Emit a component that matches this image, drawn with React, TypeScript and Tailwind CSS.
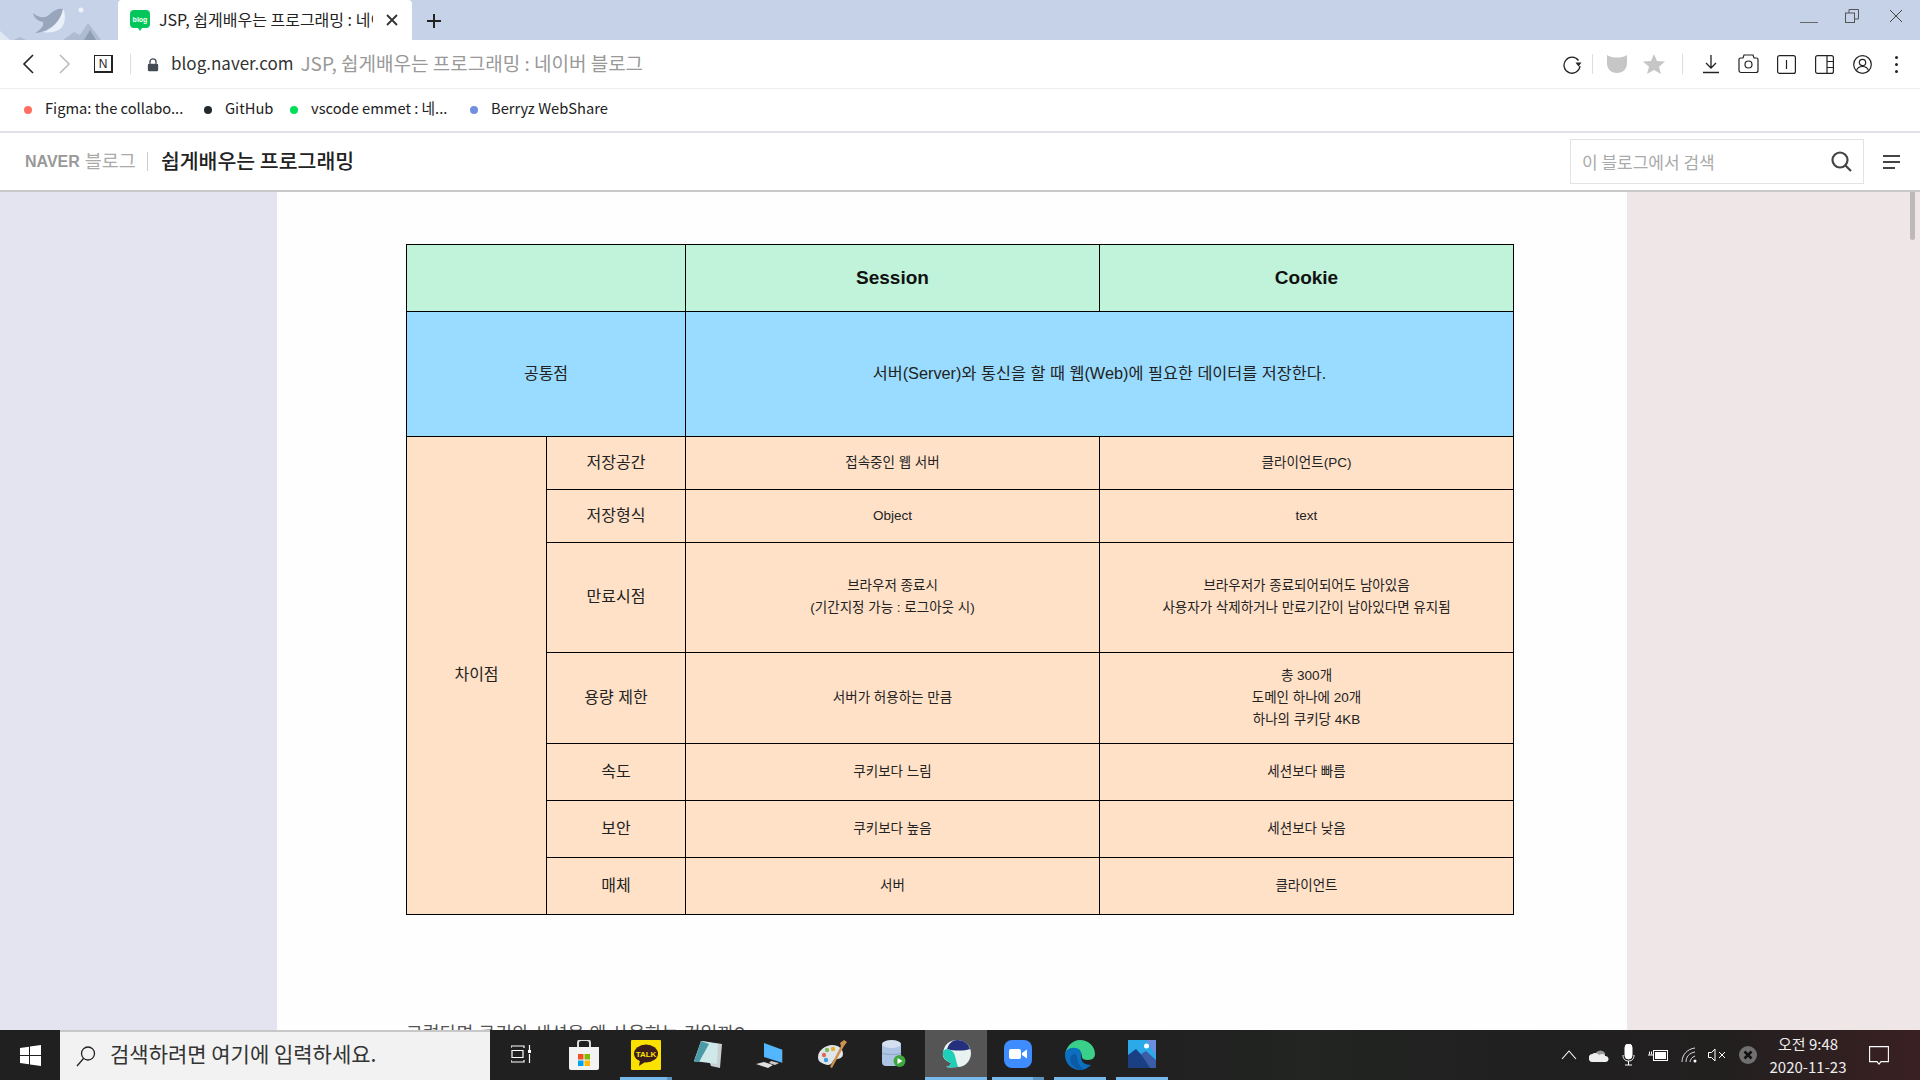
import React from "react";

const CJK = "font-['Noto_Sans_CJK_KR','Noto_Sans',sans-serif]";
const ARIAL = "font-['Liberation_Sans','Noto_Sans_CJK_KR',sans-serif]";

const td = "border border-black text-center align-middle text-[13.5px] leading-[22px] text-[#222] p-0 pb-[1px]";
const peach = "bg-[#ffe1c8]";

function Tb({ children, active, bar, split, w = 62 }: { children: React.ReactNode; active?: boolean; bar?: boolean; split?: number; w?: number }) {
  return (
    <div className={`relative h-full flex items-start pt-[10px] justify-center ${active ? "bg-[#555555]" : ""}`} style={{ width: w }}>
      {children}
      {bar ? (
        <div className={`absolute bottom-0 h-[3px] flex ${active ? "left-0 right-0" : "left-[5px] right-[5px]"}`}>
          <div className="flex-1 bg-[#76b9ed]" />
          {split ? <div className="bg-[#5b93c0]" style={{ width: split }} /> : null}
        </div>
      ) : null}
    </div>
  );
}

function Row({ label, a, b, h, first }: { label: string; a: React.ReactNode; b: React.ReactNode; h: number; first?: boolean }) {
  return (
    <tr style={{ height: h }}>
      {first ? (
        <td rowSpan={7} className={`${td} ${peach} text-[16px]`}>차이점</td>
      ) : null}
      <td className={`${td} ${peach} text-[16px]`}>{label}</td>
      <td className={`${td} ${peach}`}>{a}</td>
      <td className={`${td} ${peach}`}>{b}</td>
    </tr>
  );
}

function Bookmark({ color, text, w }: { color: string; text: string; w: number }) {
  return (
    <div className="flex items-center" style={{ width: w }}>
      <span className="w-[8px] h-[8px] rounded-full shrink-0" style={{ background: color }} />
      <span className="ml-[13px] mb-[4px] text-[14.7px] text-[#222] whitespace-nowrap">{text}</span>
    </div>
  );
}

export default function App() {
  return (
    <div className={`h-screen w-screen overflow-hidden flex flex-col bg-white ${CJK}`}>
      {/* tab strip */}
      <div className="h-[40px] shrink-0 bg-[#c5d2e8] flex relative">
        <div className="w-[118px] h-full relative overflow-hidden">
          <svg width="118" height="40" viewBox="0 0 118 40">
            <path d="M0 31 L10 40 L0 40Z" fill="#e2e8f2" />
            <path d="M14 40 L20 37 L26 40Z" fill="#aebbd0" />
            <path d="M63 40 L74 32 L80 35 L88 23 L101 40Z" fill="#aebbd0" />
            <path d="M84 40 L90 30 L96 40Z" fill="#8f9db4" />
            <path d="M33 13 C40 19 46 18 50 14 C54 10 59 8 63 9 C62 20 50 32 35 33 C42 29 44 25 43 22 C38 21 34 18 33 13Z" fill="#98a5ba" />
            <path d="M63 9 C66 14 66 24 60 29 C54 33 47 33 43 32 C52 30 61 20 63 9Z" fill="#eaf0f8" />
            <circle cx="81" cy="10" r="2.500" fill="#eef2f8" />
          </svg>
        </div>
        <div className="w-[294px] h-full bg-white rounded-t-[4px] flex items-center pl-[12px]">
          <svg width="20" height="21" viewBox="0 0 20 21" className="shrink-0">
            <rect x="0" y="0" width="20" height="18" rx="4" fill="#03c75a" />
            <path d="M8 18h4l-2 3z" fill="#03c75a" />
            <text x="10" y="11.500" fontSize="7" fontWeight="700" textAnchor="middle" fill="#fff" fontFamily="Liberation Sans">blog</text>
          </svg>
          <span className="ml-[9px] mb-[2px] w-[214px] overflow-hidden whitespace-nowrap text-[16px] text-[#222]">JSP, 쉽게배우는 프로그래밍 : 네이버 블로그</span>
          <svg width="14" height="14" viewBox="0 0 14 14" className="ml-[12px]" fill="none" stroke="#333" strokeWidth="1.800"><path d="M2 2l10 10M12 2L2 12" /></svg>
        </div>
        <svg width="16" height="16" viewBox="0 0 16 16" className="ml-[14px] mt-[13px]" fill="none" stroke="#222" strokeWidth="2"><path d="M8 1v14M1 8h14" /></svg>
        <div className="ml-auto flex items-center h-full">
          <div className="w-[18px] h-[1px] bg-[#666] mt-[4px] mr-[27px]" />
          <svg width="14" height="14" viewBox="0 0 14 14" className="mb-[8px] mr-[30px]" fill="none" stroke="#555" strokeWidth="1"><rect x="0.500" y="4" width="9" height="9.500" /><path d="M4 4V0.500h9.500V10H10" /></svg>
          <svg width="14" height="14" viewBox="0 0 14 14" className="mb-[9px] mr-[17px]" fill="none" stroke="#444" strokeWidth="1"><path d="M1 1l12 12M13 1L1 13" /></svg>
        </div>
      </div>

      {/* address bar */}
      <div className="h-[49px] shrink-0 border-b border-[#eeeeee] flex items-center">
        <svg width="14" height="22" viewBox="0 0 14 22" className="ml-[21px]" fill="none" stroke="#222" strokeWidth="1.600"><path d="M12 2L3 11l9 9" /></svg>
        <svg width="14" height="22" viewBox="0 0 14 22" className="ml-[23px]" fill="none" stroke="#bbb" strokeWidth="1.600"><path d="M2 2l9 9-9 9" /></svg>
        <div className="ml-[22px] w-[19px] h-[18px] border border-[#222] border-r-2 border-b-2 flex items-center justify-center text-[12px] leading-none text-[#222] font-['Liberation_Sans']">N</div>
        <div className="ml-[17px] w-[1px] h-[20px] bg-[#ddd]" />
        <svg width="12" height="15" viewBox="0 0 14 16" className="ml-[16px]"><path d="M3.500 7V5a3.500 3.500 0 0 1 7 0v2" fill="none" stroke="#444b55" strokeWidth="1.600" /><rect x="1" y="7" width="12" height="9" rx="1.500" fill="#444b55" /></svg>
        <span className="ml-[12px] mb-[2px] text-[17px] text-[#333] whitespace-nowrap">blog.naver.com</span>
        <span className="ml-[7px] mb-[2px] text-[19px] text-[#999] whitespace-nowrap">JSP, 쉽게배우는 프로그래밍 : 네이버 블로그</span>
        <div className="ml-auto flex items-center h-full">
          <svg width="20" height="20" viewBox="0 0 20 20" fill="none" stroke="#222" strokeWidth="1.300"><path d="M16.500 6.500A8 8 0 1 0 18 12" /><path d="M13.500 8.500h6l-3 4z" fill="#222" stroke="none" /></svg>
          <div className="ml-[10px] w-[1px] h-[20px] bg-[#ddd]" />
          <svg width="22" height="20" viewBox="0 0 22 20" className="ml-[13px]"><path d="M1 1c3 2 6 2.500 10 2.500S18 3 21 1v8c0 6-4 10-10 10S1 15 1 9z" fill="#c6c6c6" /></svg>
          <svg width="22" height="20" viewBox="0 0 22 20" className="ml-[15px]"><path d="M11 0l3 7 8 .6-6 5.100 2 7.300-7-4-7 4 2-7.300L0 7.600 8 7z" fill="#c6c6c6" /></svg>
          <div className="ml-[17px] w-[1px] h-[20px] bg-[#ddd]" />
          <svg width="18" height="20" viewBox="0 0 18 20" className="ml-[19px]" fill="none" stroke="#222" strokeWidth="1.300"><path d="M9 1v13M4 9l5 5 5-5M1 18.500h16" /></svg>
          <svg width="21" height="20" viewBox="0 0 21 20" className="ml-[18px]" fill="none" stroke="#222" strokeWidth="1.200"><path d="M1 5.500a1.500 1.500 0 0 1 1.500-1.500H5l1-3h9l1 3h2.500A1.500 1.500 0 0 1 20 5.500v11a2 2 0 0 1-2 2H3a2 2 0 0 1-2-2z" /><circle cx="10.500" cy="10.500" r="3.500" /></svg>
          <svg width="19" height="19" viewBox="0 0 19 19" className="ml-[18px]" fill="none" stroke="#222" strokeWidth="1.200"><rect x="0.600" y="0.600" width="17.800" height="17.800" rx="2" /><path d="M9.500 5v9" /></svg>
          <svg width="19" height="19" viewBox="0 0 19 19" className="ml-[19px]" fill="none" stroke="#222" strokeWidth="1.200"><rect x="0.600" y="0.600" width="17.800" height="17.800" rx="2" /><path d="M12 0.600v17.800M12 6.500h6.400M12 12.500h6.400" /></svg>
          <svg width="19" height="19" viewBox="0 0 19 19" className="ml-[19px]" fill="none" stroke="#222" strokeWidth="1.200"><circle cx="9.500" cy="9.500" r="8.800" /><circle cx="9.500" cy="7.500" r="3.200" /><path d="M3.500 15.500c1-3 3-4 6-4s5 1 6 4" /></svg>
          <div className="ml-[23px] mr-[22px] flex flex-col gap-[4px]">
            <span className="w-[3px] h-[3px] rounded-full bg-[#222]" />
            <span className="w-[3px] h-[3px] rounded-full bg-[#222]" />
            <span className="w-[3px] h-[3px] rounded-full bg-[#222]" />
          </div>
        </div>
      </div>

      {/* bookmarks */}
      <div className="h-[44px] shrink-0 border-b-2 border-[#e0e0e6] flex items-center pl-[24px]">
        <Bookmark color="#ff6f61" text="Figma: the collabo..." w={180} />
        <Bookmark color="#24292e" text="GitHub" w={86} />
        <Bookmark color="#00de5a" text="vscode emmet : 네..." w={180} />
        <Bookmark color="#6f8fdf" text="Berryz WebShare" w={160} />
      </div>

      {/* blog header */}
      <div className="h-[59px] shrink-0 border-b-2 border-[#c9c9c9] flex items-center relative">
        <span className="ml-[25px] text-[16px] font-black text-[#999] font-['Liberation_Sans']">NAVER</span>
        <span className="ml-[5px] mb-[2px] text-[18.5px] text-[#aaa]">블로그</span>
        <div className="ml-[11px] w-[1px] h-[19px] bg-[#ccc]" />
        <span className="ml-[13px] mb-[2px] text-[20.5px] font-medium text-[#222]">쉽게배우는 프로그래밍</span>
        <div className="ml-auto w-[294px] h-[45px] border border-[#e3e3e3] flex items-center pl-[11px] pr-[11px]">
          <span className="mt-[1px] text-[17px] text-[#aaa]">이 블로그에서 검색</span>
          <svg width="21" height="21" viewBox="0 0 21 21" className="ml-auto" fill="none" stroke="#444" strokeWidth="2.200"><circle cx="9" cy="9" r="7.500" /><path d="M14.500 14.500L20 20" /></svg>
        </div>
        <div className="ml-[19px] mr-[20px] flex flex-col gap-[4px] items-start">
          <span className="w-[17px] h-[2px] bg-[#444]" />
          <span className="w-[17px] h-[2px] bg-[#444]" />
          <span className="w-[12px] h-[2px] bg-[#444]" />
        </div>
      </div>

      {/* page */}
      <div className="flex-1 min-h-0 flex overflow-hidden relative">
        <div className="w-[277px] shrink-0 bg-[#e4e3f0]" />
        <div className={`flex-1 bg-[#fefefe] pl-[129px] pt-[52px] ${ARIAL}`}>
          <table className="table-fixed border-collapse w-[1108px]">
            <colgroup>
              <col className="w-[140px]" />
              <col className="w-[139px]" />
              <col className="w-[414px]" />
              <col className="w-[414px]" />
            </colgroup>
            <tbody>
              <tr className="h-[67px] bg-[#c1f3da]">
                <td colSpan={2} className="border border-black" />
                <td className="border border-black text-center align-middle font-bold text-[19px] text-[#111]">Session</td>
                <td className="border border-black text-center align-middle font-bold text-[19px] text-[#111]">Cookie</td>
              </tr>
              <tr className="h-[125px] bg-[#99dcff]">
                <td colSpan={2} className="border border-black text-center align-middle text-[16px] text-[#222] pb-[1px]">공통점</td>
                <td colSpan={2} className="border border-black text-center align-middle text-[16.3px] text-[#222] pb-[1px]">서버(Server)와 통신을 할 때 웹(Web)에 필요한 데이터를 저장한다.</td>
              </tr>
              <Row first label="저장공간" h={53} a="접속중인 웹 서버" b="클라이언트(PC)" />
              <Row label="저장형식" h={53} a="Object" b="text" />
              <Row label="만료시점" h={110} a={<>브라우저 종료시<br />(기간지정 가능 : 로그아웃 시)</>} b={<>브라우저가 종료되어되어도 남아있음<br />사용자가 삭제하거나 만료기간이 남아있다면 유지됨</>} />
              <Row label="용량 제한" h={91} a="서버가 허용하는 만큼" b={<>총 300개<br />도메인 하나에 20개<br />하나의 쿠키당 4KB</>} />
              <Row label="속도" h={57} a="쿠키보다 느림" b="세션보다 빠름" />
              <Row label="보안" h={57} a="쿠키보다 높음" b="세션보다 낮음" />
              <Row label="매체" h={57} a="서버" b="클라이언트" />
            </tbody>
          </table>
          <p className="mt-[105px] text-[18.3px] text-[#555] whitespace-nowrap">그렇다면 쿠키와 세션을 왜 사용하는 것일까?</p>
        </div>
        <div className="w-[293px] shrink-0 bg-[#efe6e8]" />
        <div className="absolute right-[5px] top-0 w-[5px] h-[48px] rounded-b bg-[#bdb8b9]" />
      </div>

      {/* taskbar */}
      <div className="h-[50px] shrink-0 bg-[linear-gradient(90deg,#202020_0%,#202020_60%,#222522_68%,#202020_78%,#221f1f_90%,#3a2022_100%)] flex items-center relative z-10">
        <div className="w-[60px] h-full flex items-center justify-center">
          <svg width="21" height="21" viewBox="0 0 21 21" fill="#fff"><path d="M0 3l9-1.300V10H0zM10 1.500L21 0v10H10zM0 11h9v8.300L0 18zM10 11h11v10l-11-1.500z" /></svg>
        </div>
        <div className="w-[430px] h-full bg-[#f2f2f2] border-t-2 border-[#c8c8c8] flex items-center pl-[15px]">
          <svg width="22" height="22" viewBox="0 0 22 22" fill="none" stroke="#222" strokeWidth="1.300"><circle cx="13" cy="8.500" r="6.500" /><path d="M8.500 13.500L2 21" /></svg>
          <span className="ml-[13px] mb-[5px] text-[21px] text-[#333] whitespace-nowrap">검색하려면 여기에 입력하세요.</span>
        </div>
        <Tb w={63}>
          <svg width="21" height="19" viewBox="0 0 21 19" className="mt-[5px]" fill="none" stroke="#fff" strokeWidth="1.200"><path d="M0 3V1h13v2M1 5.500h11v7H1zM0 15v2h13v-2M18.500 0v5M18.500 9v9" /><rect x="17" y="5" width="3" height="3" fill="#fff" stroke="none" /></svg>
        </Tb>
        <Tb>
          <svg width="30" height="30" viewBox="0 0 30 30"><path d="M9 7V3a3 3 0 0 1 3-3h6a3 3 0 0 1 3 3v4" fill="none" stroke="#ddd" strokeWidth="2" /><path d="M0 7h30v21a2 2 0 0 1-2 2H2a2 2 0 0 1-2-2z" fill="#f3f3f3" /><rect x="9" y="14" width="5.500" height="5.500" fill="#f25022" /><rect x="15.500" y="14" width="5.500" height="5.500" fill="#7fba00" /><rect x="9" y="20.500" width="5.500" height="5.500" fill="#00a4ef" /><rect x="15.500" y="20.500" width="5.500" height="5.500" fill="#ffb900" /></svg>
        </Tb>
        <Tb bar split={5}>
          <svg width="30" height="30" viewBox="0 0 30 30"><rect width="30" height="30" rx="1" fill="#fae100" /><ellipse cx="15" cy="13.500" rx="12" ry="9" fill="#3a1d1d" /><path d="M9 20l-1 6 6-4z" fill="#3a1d1d" /><text x="15" y="16.500" fontSize="8" fontWeight="700" textAnchor="middle" fill="#fae100" fontFamily="Liberation Sans">TALK</text></svg>
        </Tb>
        <Tb>
          <svg width="28" height="28" viewBox="0 0 28 28"><path d="M8 1l20 3-2 24-9-2z" fill="#c9ced2" /><path d="M7 1l17 3-1 20L0 21z" fill="#cfe8ea" /><path d="M7 1l8 3L5 22H0z" fill="#4a9aa8" /></svg>
        </Tb>
        <Tb>
          <svg width="28" height="26" viewBox="0 0 28 26" className="mt-[2px]"><path d="M8 1l19 7v13L8 15z" fill="#52b7ff" /><path d="M26 8l1 0v13l-1 0z" fill="#444" /><path d="M15 19l8 2-4 2-6-2z" fill="#ccc" /><path d="M0 22l8-2 9 3-5 3z" fill="#e0e0e0" /></svg>
        </Tb>
        <Tb>
          <svg width="30" height="28" viewBox="0 0 30 28"><path d="M1 17C1 10 9 5 15 5c7 0 11 4 11 9 0 4-4 5-7 5-2 0-3 2-4 4-2 3-7 2-10 0-3-1-4-3-4-6z" fill="#dfe6ea" /><circle cx="7" cy="15" r="2.200" fill="#e06b5b" /><circle cx="10" cy="10" r="2.200" fill="#7cba5c" /><circle cx="16" cy="9" r="2.200" fill="#e5b030" /><circle cx="9" cy="20" r="2.200" fill="#3c9bdc" /><path d="M23 3l4-3 3 2-3 4-3 0zM24 6l3 0-12 22-2-1z" fill="#d09050" /></svg>
        </Tb>
        <Tb>
          <svg width="24" height="28" viewBox="0 0 24 28"><rect x="0" y="2" width="19" height="24" rx="4" fill="#aec4e4" /><ellipse cx="9.500" cy="4" rx="9.500" ry="4" fill="#d4e0f0" /><path d="M0 13c3 2 16 2 19 0" fill="none" stroke="#8aa4c8" strokeWidth="1" /><circle cx="17.500" cy="21" r="6" fill="#3ea83e" /><path d="M15.500 18l5 3-5 3z" fill="#fff" /></svg>
        </Tb>
        <Tb active bar>
          <svg width="29" height="28" viewBox="0 0 29 28"><path d="M1 13C2 5 7 0 15 0c8 0 14 6 14 13 0 8-6 14-13 14-4 0-8 1-12 0 3-1 5-2 5-4-5-2-9-5-8-10z" fill="#e8f2f0" /><path d="M5 9C7 3 11 0 15 0c6 0 11 3 13 9-6 2-16 2-23 0z" fill="#24307c" /><path d="M1 12c1-2 2-3 4-3 5 1 7 3 8 7 1 4 2 8 3 11-4 0-8 1-12 0 3-1 5-2 5-4-5-2-9-6-8-11z" fill="#1fcfb8" /></svg>
        </Tb>
        <Tb bar split={11}>
          <svg width="28" height="28" viewBox="0 0 28 28"><rect width="28" height="28" rx="8" fill="#3f8cff" /><rect x="5" y="9" width="12" height="10" rx="2" fill="#fff" /><path d="M18 13l5-3.500v9L18 15z" fill="#fff" /></svg>
        </Tb>
        <Tb bar>
          <svg width="30" height="30" viewBox="0 0 30 30"><path d="M15 0c8 0 15 6 15 14 0 3-2 6-7 6-4 0-6-1-6-3 0-5-3-8-7-8-4 0-8 2-10 6C1 7 7 0 15 0z" fill="#3bd08a" /><path d="M0 15c0-5 5-8 10-7 6 0 7 6 6 9 0 5 4 8 10 8-3 3-7 5-11 5C6 30 0 23 0 15z" fill="#0c6fc0" /><path d="M10 14c-4 0-6 4-4 9 3 5 8 7 13 7-4-3-7-8-7-13 0-1-1-3-2-3z" fill="#0c59a4" /></svg>
        </Tb>
        <Tb bar>
          <svg width="28" height="28" viewBox="0 0 28 28"><rect width="28" height="28" fill="#2aaae8" /><path d="M22 0h6v16L18 0z" fill="#6a8fe0" /><circle cx="18.500" cy="6" r="2.500" fill="#fff" /><path d="M0 28V15L8 9l12 13 3 6z" fill="#1a3f82" /><path d="M13 14l5-3 10 9v8h-6z" fill="#3c5ca8" /></svg>
        </Tb>

        <div className="ml-auto flex items-center h-full text-white">
          <svg width="16" height="10" viewBox="0 0 16 10" fill="none" stroke="#fff" strokeWidth="1.100"><path d="M1 9l7-8 7 8" /></svg>
          <svg width="20" height="14" viewBox="0 0 20 14" className="ml-[12px]"><path d="M6 7a5.500 5.500 0 0 1 10 -2l0 3z" fill="#9a9a9a" /><path d="M4 14a4 4 0 0 1-.5-8C5 4 9 5 10 7c3-2 6-1 6 1a3 3 0 0 1 1 6z" fill="#eee" /></svg>
          <svg width="13" height="22" viewBox="0 0 13 22" className="ml-[13px]" fill="none" stroke="#fff" strokeWidth="1"><rect x="3" y="0" width="7" height="15" rx="3.500" fill="#fff" /><path d="M1 11c0 4 2 6 5.500 6S12 15 12 11M6.500 17v4M3 21h7" /></svg>
          <svg width="20" height="14" viewBox="0 0 20 14" className="ml-[13px]" fill="none" stroke="#fff" strokeWidth="1"><rect x="5.500" y="2.500" width="14" height="10" /><rect x="7" y="4" width="11" height="7" fill="#fff" stroke="none" /><path d="M0 7h5M1.500 3.500v3M3.500 3.500v3" /></svg>
          <svg width="16" height="16" viewBox="0 0 16 16" className="ml-[13px]" fill="none" stroke="#ddd" strokeWidth="1"><path d="M1 15C1 8 6 2 14 1M5 15c0-5 3-9 9-10M9 15c0-2 2-5 5-6" /><circle cx="14" cy="14" r="1.500" fill="#fff" stroke="none" /></svg>
          <svg width="19" height="14" viewBox="0 0 19 14" className="ml-[11px]" fill="none" stroke="#fff" strokeWidth="1"><path d="M0.500 4.500h3L7 1v12l-3.500-3.500h-3zM11 4l6 6M17 4l-6 6" /></svg>
          <svg width="18" height="18" viewBox="0 0 18 18" className="ml-[12px]"><circle cx="9" cy="9" r="9" fill="#707070" /><path d="M5.500 5.500l7 7M12.500 5.500l-7 7" stroke="#111" strokeWidth="2.500" /></svg>
          <div className="ml-[13px] w-[76px] flex flex-col items-center text-[15px] leading-[23px] text-[#eee] whitespace-nowrap">
            <span>오전 9:48</span>
            <span>2020-11-23</span>
          </div>
          <svg width="20" height="19" viewBox="0 0 20 19" className="ml-[23px] mr-[31px]" fill="none" stroke="#fff" strokeWidth="1.100"><path d="M0.600 0.600h18.800v15h-7.400l-2 2.500-2-2.500H0.600z" /></svg>
        </div>
      </div>
    </div>
  );
}
